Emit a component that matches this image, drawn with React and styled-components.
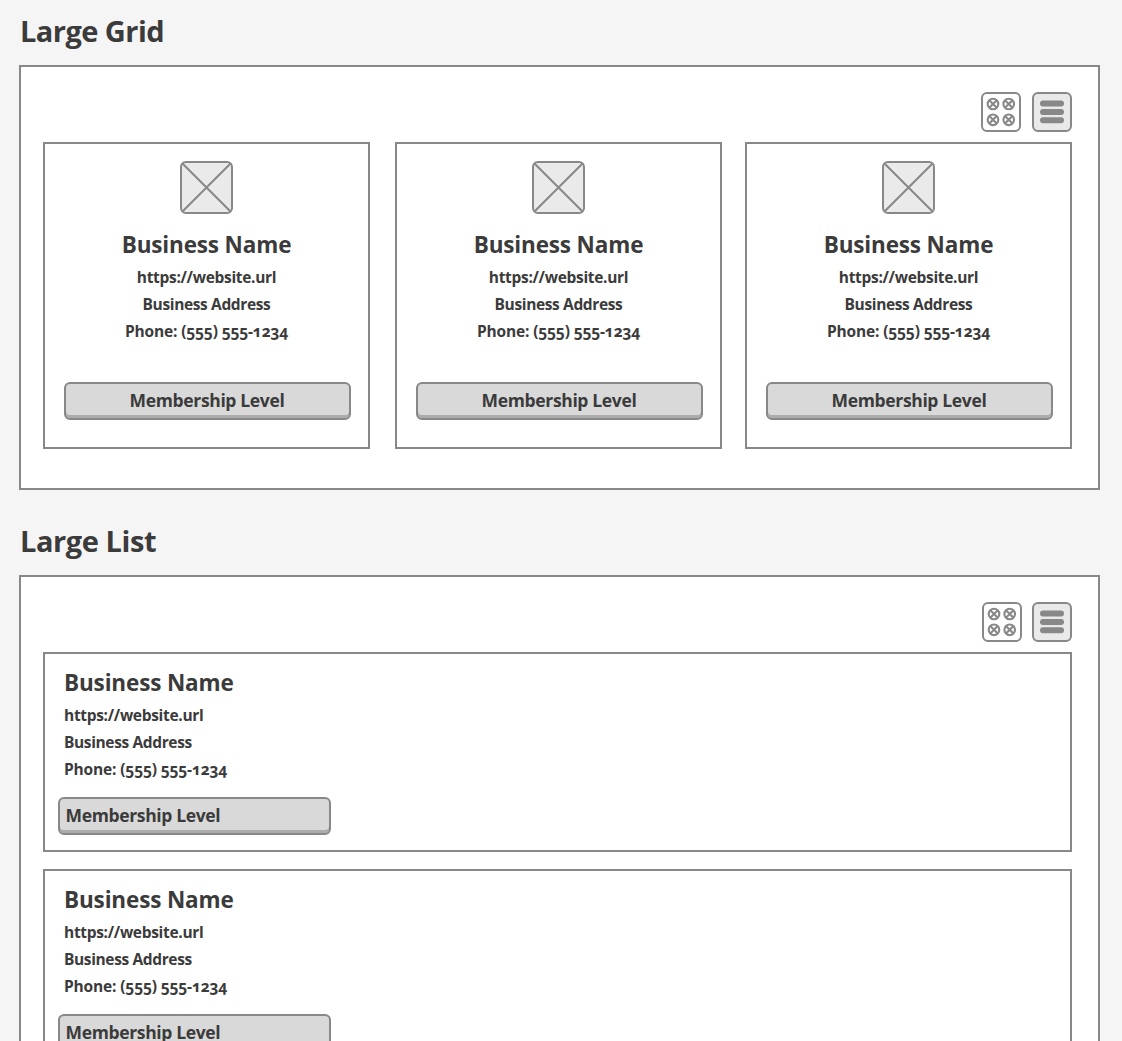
import React from 'react';
import styled, { createGlobalStyle } from 'styled-components';

const line = '#888888';
const ink = '#3b3b3b';

const GlobalStyle = createGlobalStyle`
  *, *::before, *::after { box-sizing: border-box; }
  html, body { margin: 0; height: 100%; overflow: hidden; background: #f5f5f5; }
  body { color: ${ink}; font-family: "Open Sans", "Noto Sans", sans-serif; font-weight: 700; }
  h1, h2, p { margin: 0; }
`;

const Page = styled.main`
  display: flex;
  flex-direction: column;
  width: 1122px;
  height: 1041px;
  padding: 0 22px 0 19px;
  overflow: hidden;
`;

const Heading = styled.h1`
  flex: none;
  height: 65px;
  padding: 11px 0 0 1px;
  font-size: 29px;
  line-height: 40px;
  font-weight: 700;
  letter-spacing: ${(p) => p.$tracking};
  white-space: nowrap;
`;

const Panel = styled.section`
  flex: none;
  height: ${(p) => p.$height}px;
  margin-bottom: 20px;
  padding: 25px 26px 0 22px;
  border: 2px solid ${line};
  background: #fff;
`;

const Toolbar = styled.div`
  display: flex;
  justify-content: flex-end;
  gap: ${(p) => p.$gap}px;
  margin-bottom: 10px;
`;

const ToolButton = styled.button`
  display: flex;
  width: 40px;
  height: 40px;
  padding: 0;
  border: 2px solid ${line};
  border-radius: 6px;
  background: ${(p) => (p.$active ? '#e9e9e9' : '#fff')};
  svg { flex: none; margin: -2px; }
`;

const Grid = styled.div`
  display: grid;
  grid-template-columns: 352px 350px 327px;
`;

const GridCard = styled.article`
  display: flex;
  flex-direction: column;
  align-items: center;
  width: 327px;
  height: 307px;
  padding-top: 17px;
  border: 2px solid ${line};
  text-align: center;
`;

const List = styled.div`
  display: flex;
  flex-direction: column;
  gap: 17px;
`;

const ListCard = styled.article`
  display: flex;
  flex-direction: column;
  height: 200px;
  padding: 12px 0 0 19px;
  border: 2px solid ${line};
`;

const Picture = styled.svg`
  flex: none;
  display: block;
  margin-bottom: 14px;
`;

const Name = styled.h2`
  height: 36px;
  font-size: 22.5px;
  line-height: 34px;
  font-weight: 700;
  letter-spacing: -0.15px;
  white-space: nowrap;
`;

const Detail = styled.p`
  height: 27px;
  font-size: 15.5px;
  line-height: 27px;
  letter-spacing: ${(p) => p.$tracking};
  font-variant-numeric: oldstyle-nums;
  white-space: nowrap;
`;

const Level = styled.button`
  flex: none;
  width: ${(p) => (p.$wide ? 287 : 273)}px;
  height: 38px;
  margin: ${(p) => (p.$wide ? '37px 0 0 2px' : '14px 0 0 -6px')};
  padding: ${(p) => (p.$wide ? '0 7px 2px 6px' : '0 6px 2px 5.5px')};
  border: 2px solid ${line};
  border-radius: 6px;
  background: #d9d9d9;
  box-shadow: inset 0 -3px 0 #acacac;
  color: ${ink};
  font: 700 17.5px/32px "Open Sans", "Noto Sans", sans-serif;
  letter-spacing: -0.35px;
  text-align: ${(p) => (p.$wide ? 'center' : 'left')};
  white-space: nowrap;
`;

const circles = [[12, 12], [27.7, 12], [12, 27.8], [27.7, 27.8]];

function GridIcon() {
  return (
    <svg width="40" height="40" viewBox="0 0 40 40" fill="none" stroke={line} strokeWidth="2.1">
      {circles.map(([x, y]) => (
        <g key={`${x}-${y}`}>
          <circle cx={x} cy={y} r="5.3" />
          <path d={`M${x - 3.5} ${y - 3.5}l7 7m0-7l-7 7`} />
        </g>
      ))}
    </svg>
  );
}

function ListIcon() {
  return (
    <svg width="40" height="40" viewBox="0 0 40 40" fill={line}>
      {[8.6, 17, 25.3].map((y) => <rect key={y} x="8" y={y} width="24" height="5.9" rx="2.95" />)}
    </svg>
  );
}

function ViewSwitch({ gap }) {
  return (
    <Toolbar $gap={gap}>
      <ToolButton aria-label="Grid view"><GridIcon /></ToolButton>
      <ToolButton $active aria-label="List view"><ListIcon /></ToolButton>
    </Toolbar>
  );
}

function Placeholder() {
  return (
    <Picture width="53" height="53" viewBox="0 0 53 53" fill="none" stroke={line} strokeWidth="2">
      <rect x="1" y="1" width="51" height="51" rx="5" fill="#eaeaea" />
      <path d="M2.2 2.2L50.8 50.8M50.8 2.2L2.2 50.8" />
    </Picture>
  );
}

function Business() {
  return (
    <>
      <Name>Business Name</Name>
      <Detail $tracking="-0.31px">https://website.url</Detail>
      <Detail $tracking="-0.37px">Business Address</Detail>
      <Detail $tracking="-0.15px">Phone: (555) 555-1234</Detail>
    </>
  );
}

export default function App() {
  return (
    <>
      <GlobalStyle />
      <Page>
        <Heading $tracking="-0.55px">Large Grid</Heading>
        <Panel $height={425}>
          <ViewSwitch gap={11} />
          <Grid>
            {[0, 1, 2].map((i) => (
              <GridCard key={i}>
                <Placeholder />
                <Business />
                <Level $wide>Membership Level</Level>
              </GridCard>
            ))}
          </Grid>
        </Panel>
        <Heading $tracking="-0.42px">Large List</Heading>
        <Panel $height={560}>
          <ViewSwitch gap={10} />
          <List>
            {[0, 1].map((i) => (
              <ListCard key={i}>
                <Business />
                <Level>Membership Level</Level>
              </ListCard>
            ))}
          </List>
        </Panel>
      </Page>
    </>
  );
}
